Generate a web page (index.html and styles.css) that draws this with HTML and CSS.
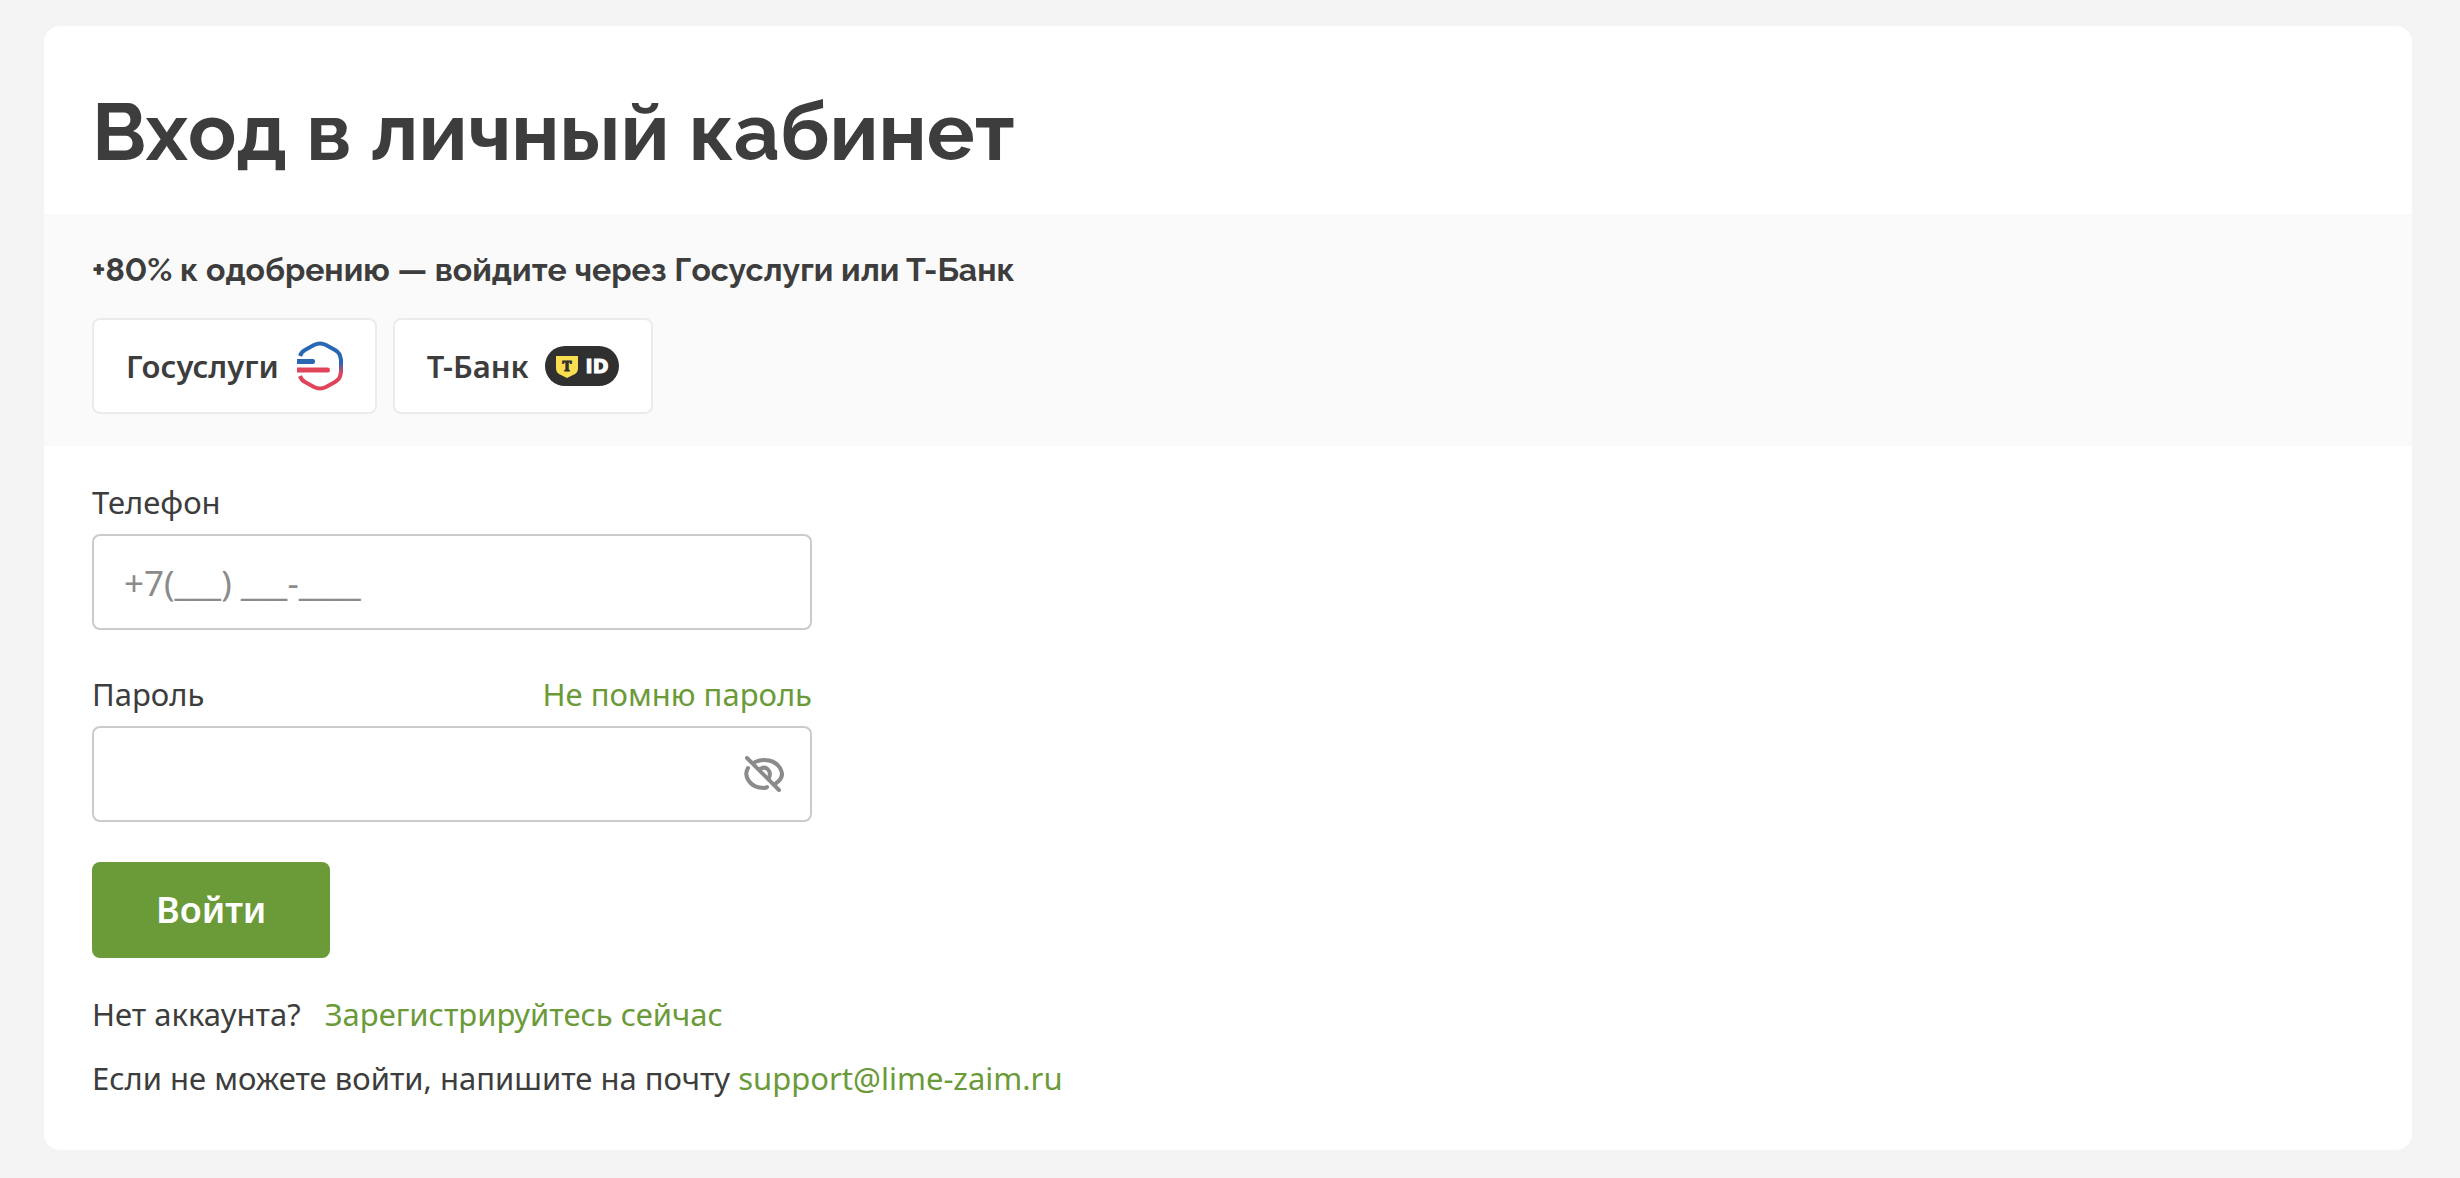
FILE: index.html
```
<!DOCTYPE html>
<html lang="ru">
<head>
    <meta charset="UTF-8">
    <meta name="viewport" content="width=device-width, initial-scale=1.0">
    <title>Вход в личный кабинет</title>
    <link rel="stylesheet" href="styles.css">
</head>
<body>
    <main class="card">
        <h1>Вход в личный кабинет</h1>

        <section class="social">
            <h2>+80% к одобрению — войдите через Госуслуги или Т-Банк</h2>
            <div class="social-buttons">
                <button type="button" class="social-button">
                    Госуслуги
                    <svg width="48" height="50" viewBox="-2 0 48 50" fill="none" aria-hidden="true">
                        <defs>
                            <linearGradient id="flag" x1="0" y1="0" x2="0" y2="50" gradientUnits="userSpaceOnUse">
                                <stop offset="0.44" stop-color="#2a66b1"/>
                                <stop offset="0.64" stop-color="#df4459"/>
                            </linearGradient>
                        </defs>
                        <path d="M3 15C4 12 6 10 8 9L17 4Q23 1 29 4L38 9C43 12 43 14 44 19V31C43 36 43 38 38 41L29 46Q23 49 17 46L8 41C6 40 4 38 3 35" stroke="url(#flag)" stroke-width="4"/>
                        <path d="M0 18H16Q18 18 18 20V21Q18 23 16 23H0Z" fill="#2a66b1"/>
                        <path d="M0 26.5H31Q33 26.5 33 29Q33 31.5 31 31.5H0Z" fill="#df4459"/>
                    </svg>
                </button>
                <button type="button" class="social-button">
                    Т-Банк
                    <svg width="74" height="40" viewBox="0 0 74 40" aria-hidden="true">
                        <rect width="74" height="40" rx="20" fill="#303030"/>
                        <path d="M11 10H33V22Q33 26 30 28L22 32L14 28Q11 26 11 22Z" fill="#fbdd50"/>
                        <text class="badge-t" x="22" y="25">T</text>
                        <text class="badge-id" x="52" y="27">ID</text>
                    </svg>
                </button>
            </div>
        </section>

        <form class="login-form">
            <div class="field">
                <div class="field-head">
                    <label for="phone">Телефон</label>
                </div>
                <input type="tel" id="phone" placeholder="+7(___) ___-____">
            </div>
            <div class="field">
                <div class="field-head">
                    <label for="password">Пароль</label>
                    <a href="#">Не помню пароль</a>
                </div>
                <div class="password-box">
                    <input type="password" id="password">
                    <button type="button" class="toggle-password" aria-label="Показать пароль">
                        <svg width="40" height="36" viewBox="0 0 40 36" fill="none" stroke="#8b8b8b" stroke-width="4" stroke-linecap="round" aria-hidden="true">
                            <path d="M3 2L35 34"/>
                            <path d="M4 12C-1 20 6 32 20 32Q22 32 23 31" />
                            <path d="M11 6C20 2 31 4 36 12C39 17 39 23 31 28"/>
                            <path d="M16 13C22 9 28 15 25 22"/>
                        </svg>
                    </button>
                </div>
            </div>
            <button type="submit" class="submit-button">Войти</button>
        </form>

        <div class="links">
            <p class="register">Нет аккаунта? <a href="#">Зарегистрируйтесь сейчас</a></p>
            <p>Если не можете войти, напишите на почту <a href="mailto:support@lime-zaim.ru">support@lime-zaim.ru</a></p>
        </div>
    </main>
</body>
</html>
```
FILE: styles.css
```
* {
    box-sizing: border-box;
}

body {
    margin: 0;
    padding: 26px 48px 28px 44px;
    background-color: #f4f4f4;
    color: #3d3d3d;
    font-family: "Noto Sans", sans-serif;
    font-size: 31px;
    line-height: 48px;
}

a {
    color: #6b9a39;
    text-decoration: none;
}

.card {
    background-color: #fff;
    border-radius: 16px;
    padding-bottom: 48px;
}

h1,
h2 {
    font-family: Raleway, Inter, sans-serif;
    font-weight: 700;
    font-variant-numeric: lining-nums;
}

h1 {
    margin: 0;
    padding: 58px 48px 34px;
    font-size: 80px;
    line-height: 96px;
}

/* Quick login */
.social {
    padding: 32px 48px;
    background-color: #fafafa;
}

h2 {
    margin: 0 0 24px;
    font-size: 32px;
    line-height: 48px;
}

.social-buttons {
    display: flex;
    gap: 16px;
}

.social-button {
    display: flex;
    align-items: center;
    gap: 16px;
    height: 96px;
    padding: 0 32px;
    border: 2px solid #ebebeb;
    border-radius: 8px;
    background-color: #fff;
    color: inherit;
    font: inherit;
    font-weight: 600;
    cursor: pointer;
}

.badge-t {
    font-family: "DejaVu Serif", serif;
    font-size: 12px;
    font-weight: 700;
    text-anchor: middle;
    fill: #303030;
    stroke: #303030;
    stroke-width: 1px;
}

.badge-id {
    font-family: "DejaVu Sans", sans-serif;
    font-size: 19px;
    font-weight: 700;
    text-anchor: middle;
    fill: #fff;
    stroke: #fff;
    stroke-width: 1px;
}

/* Login form */
.login-form {
    max-width: 816px;
    padding: 32px 48px;
}

.field {
    margin-bottom: 40px;
}

.field-head {
    display: flex;
    justify-content: space-between;
    margin-bottom: 8px;
}

.field input {
    display: block;
    width: 100%;
    height: 96px;
    padding: 0 30px;
    border: 2px solid #cbcbcb;
    border-radius: 8px;
    background-color: #fff;
    color: inherit;
    font: inherit;
    font-size: 35px;
}

.field input::placeholder {
    color: #8b8b8b;
    opacity: 1;
}

.password-box {
    position: relative;
}

.toggle-password {
    position: absolute;
    top: 0;
    right: 0;
    display: flex;
    align-items: center;
    height: 96px;
    padding: 0 28px;
    border: none;
    background: none;
    cursor: pointer;
}

.submit-button {
    display: block;
    height: 96px;
    padding: 0 64px;
    border: none;
    border-radius: 8px;
    background-color: #6b9a39;
    color: #fff;
    font: inherit;
    font-size: 36px;
    font-weight: 600;
    cursor: pointer;
}

.links {
    padding: 0 48px;
}

.links p {
    margin: 0 0 16px;
}

.links p:last-child {
    margin-bottom: 0;
}

.register a {
    margin-left: 16px;
}
```
